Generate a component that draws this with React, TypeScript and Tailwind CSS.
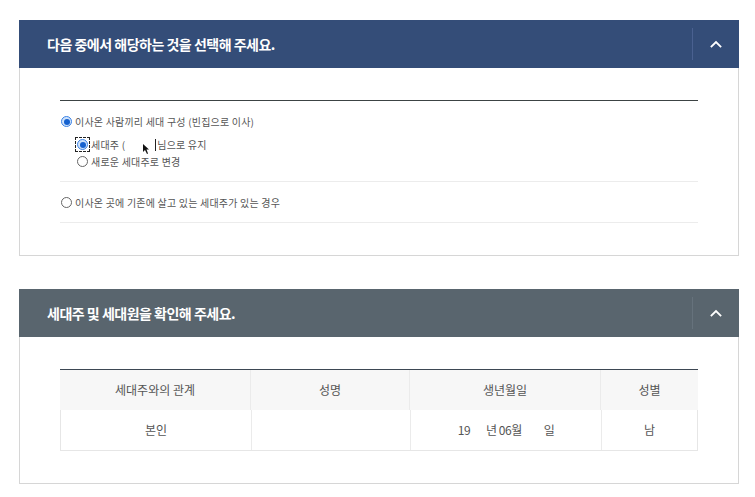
import React from "react";

const font = { fontFamily: '"Noto Sans CJK KR", "Noto Sans", sans-serif' };

function Chevron() {
  return (
    <svg width="12" height="8" viewBox="0 0 12 8" fill="none">
      <path d="M1.5 6.5 L6 2 L10.5 6.5" stroke="#ffffff" strokeWidth="1.8" strokeLinecap="square" />
    </svg>
  );
}

function Radio({ checked }: { checked?: boolean }) {
  return checked ? (
    <span className="w-[11px] h-[11px] rounded-full border border-[#3b82e6] bg-[#cfe3fb] flex items-center justify-center shrink-0">
      <span className="w-[6px] h-[6px] rounded-full bg-[#1561cf]" />
    </span>
  ) : (
    <span className="w-[11px] h-[11px] rounded-full border border-[#666] bg-white shrink-0" />
  );
}

function Header({ title, bg, line }: { title: string; bg: string; line: string }) {
  return (
    <div className={`h-12 flex items-center ${bg}`}>
      <div className="flex-1 pl-[28px] text-white font-bold text-[14px] tracking-[-0.5px]">{title}</div>
      <div className={`w-px h-8 ${line}`} />
      <div className="w-[46px] flex items-center justify-center">
        <Chevron />
      </div>
    </div>
  );
}

export default function App() {
  return (
    <div className="w-[755px] h-[497px] bg-white pt-5 px-[19px]" style={font}>
      <div className="w-[720px]">
        <Header title="다음 중에서 해당하는 것을 선택해 주세요." bg="bg-[#344d78]" line="bg-[#4a6190]" />
        <div className="border-x border-b border-[#d6d6d6] px-10 pt-8 pb-[32px]">
          <div className="border-t border-[#3c4344]">
            <div className="border-b border-[#ececec] pt-[14px] pb-[13px] text-[10px] tracking-[0.2px] text-[#555]">
              <div className="flex items-center gap-[3px] pl-[1px] h-[13px]">
                <Radio checked />
                <span>이사온 사람끼리 세대 구성 (빈집으로 이사)</span>
              </div>
              <div className="pl-[16px] mt-[10px]">
                <div className="flex items-center h-[13px] relative">
                  <span className="outline outline-1 outline-dashed outline-[#222] flex items-center justify-center w-[13px] h-[13px]">
                    <Radio checked />
                  </span>
                  <span className="ml-[2px]">세대주 (</span>
                  <span className="w-[31px] h-[13px] relative">
                    <span className="absolute right-[0px] top-[1px] h-[12px] w-px bg-[#222]" />
                    <svg className="absolute left-[18px] top-[6px]" width="8" height="10" viewBox="0 0 8 10">
                      <path d="M0 0 L0 8 L2 6 L4 10 L5 9.5 L3.5 5.5 L6 5.5 Z" fill="#111" />
                    </svg>
                  </span>
                  <span className="ml-[1px]">님으로 유지</span>
                </div>
                <div className="flex items-center gap-[3px] h-[13px] mt-[4px] pl-[1px]">
                  <Radio />
                  <span>새로운 세대주로 변경</span>
                </div>
              </div>
            </div>
            <div className="border-b border-[#ececec] h-[41px] flex items-center gap-[3px] pl-[1px] text-[10px] tracking-[0.2px] text-[#555]">
              <Radio />
              <span>이사온 곳에 기존에 살고 있는 세대주가 있는 경우</span>
            </div>
          </div>
        </div>
      </div>

      <div className="w-[720px] mt-[33px]">
        <Header title="세대주 및 세대원을 확인해 주세요." bg="bg-[#59656e]" line="bg-[#66727c]" />
        <div className="border-x border-b border-[#d6d6d6] px-10 pt-8 pb-[32px]">
          <div className="border-t border-[#3d4753] text-[12px] text-[#555]">
            <div className="grid grid-cols-[191px_159px_191px_1fr] bg-[#f7f7f7] h-[40px]">
              <div className="flex items-center justify-center border-r border-[#ebebeb]">세대주와의 관계</div>
              <div className="flex items-center justify-center border-r border-[#ebebeb]">성명</div>
              <div className="flex items-center justify-center border-r border-[#ebebeb]">생년월일</div>
              <div className="flex items-center justify-center">성별</div>
            </div>
            <div className="grid grid-cols-[191px_159px_191px_1fr] h-[41px] border-x border-b border-[#e6e6e6]">
              <div className="flex items-center justify-center border-r border-[#ebebeb]">본인</div>
              <div className="border-r border-[#ebebeb]" />
              <div className="flex items-center justify-center border-r border-[#ebebeb] tracking-[-0.5px]">
                <span>19</span>
                <span className="ml-[16px]">년 06월</span>
                <span className="ml-[22px]">일</span>
              </div>
              <div className="flex items-center justify-center">남</div>
            </div>
          </div>
        </div>
      </div>
    </div>
  );
}
